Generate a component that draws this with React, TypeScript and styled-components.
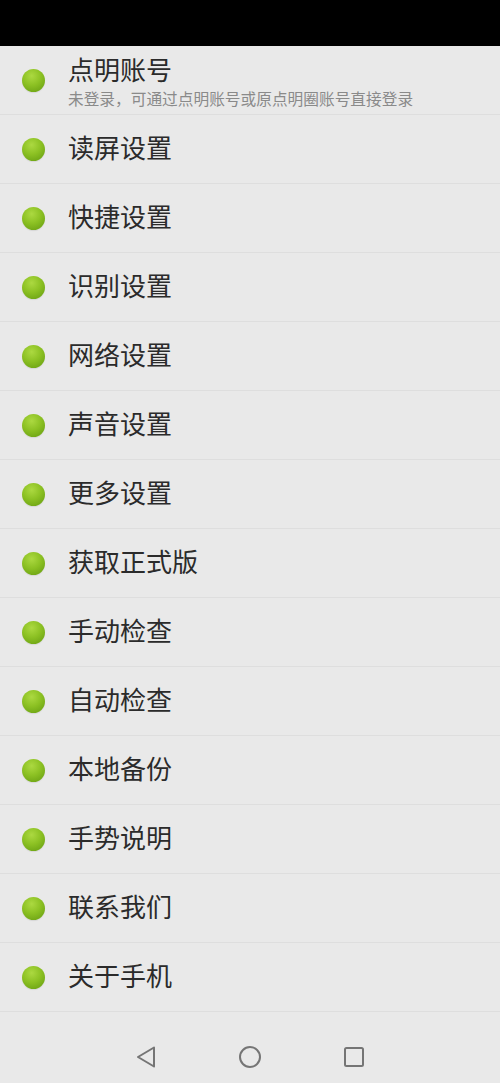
import React from "react";
import styled, { createGlobalStyle } from "styled-components";

const GlobalStyle = createGlobalStyle`
  html, body {
    margin: 0;
    padding: 0;
    background: #e9e9e9;
  }
  body {
    font-family: "Noto Sans CJK SC", "Noto Sans", sans-serif;
  }
`;

const items = [
  "读屏设置",
  "快捷设置",
  "识别设置",
  "网络设置",
  "声音设置",
  "更多设置",
  "获取正式版",
  "手动检查",
  "自动检查",
  "本地备份",
  "手势说明",
  "联系我们",
  "关于手机",
];

export default function App() {
  return (
    <Screen>
      <GlobalStyle />
      <StatusBar />
      <List>
        <Row>
          <Dot />
          <TextCol>
            <Title>点明账号</Title>
            <Subtitle>未登录，可通过点明账号或原点明圈账号直接登录</Subtitle>
          </TextCol>
        </Row>
        {items.map((label) => (
          <Row key={label}>
            <Dot />
            <Label>{label}</Label>
          </Row>
        ))}
      </List>
      <NavBar>
        <NavButton>
          <svg width="22" height="24" viewBox="0 0 22 24">
            <path
              d="M19 2.5 L3 12 L19 21.5 Z"
              fill="none"
              stroke="#757575"
              strokeWidth="2"
              strokeLinejoin="round"
            />
          </svg>
        </NavButton>
        <NavButton>
          <svg width="24" height="24" viewBox="0 0 24 24">
            <circle cx="12" cy="12" r="10" fill="none" stroke="#757575" strokeWidth="2" />
          </svg>
        </NavButton>
        <NavButton>
          <svg width="22" height="22" viewBox="0 0 22 22">
            <rect x="2" y="2" width="18" height="18" rx="1.5" fill="none" stroke="#757575" strokeWidth="2" />
          </svg>
        </NavButton>
      </NavBar>
    </Screen>
  );
}

const Screen = styled.div`
  width: 500px;
  height: 1083px;
  display: flex;
  flex-direction: column;
  background: #e9e9e9;
  overflow: hidden;
`;

const StatusBar = styled.div`
  height: 46px;
  background: #000;
  flex-shrink: 0;
`;

const List = styled.div`
  display: flex;
  flex-direction: column;
`;

const Row = styled.div`
  height: 68px;
  display: flex;
  align-items: center;
  gap: 23px;
  padding-left: 22px;
  border-bottom: 1px solid #dedede;
  flex-shrink: 0;
`;

const Dot = styled.div`
  width: 23px;
  height: 23px;
  border-radius: 50%;
  flex-shrink: 0;
  background: radial-gradient(circle at 42% 30%, #acd941 0%, #8cc123 45%, #62990f 100%);
  box-shadow: 0 1px 1px rgba(0, 0, 0, 0.08);
`;

const TextCol = styled.div`
  display: flex;
  flex-direction: column;
`;

const Title = styled.div`
  font-size: 26px;
  line-height: 34px;
  color: #2b2b2b;
`;

const Label = styled(Title)`
  padding-bottom: 5px;
`;

const Subtitle = styled.div`
  font-size: 15.7px;
  line-height: 20px;
  color: #8a8a8a;
  margin-top: 3px;
`;

const NavBar = styled.div`
  flex: 1;
  display: flex;
  justify-content: center;
  align-items: center;
  gap: 80px;
  padding-top: 18px;
`;

const NavButton = styled.div`
  width: 24px;
  height: 24px;
  display: flex;
  align-items: center;
  justify-content: center;
`;
